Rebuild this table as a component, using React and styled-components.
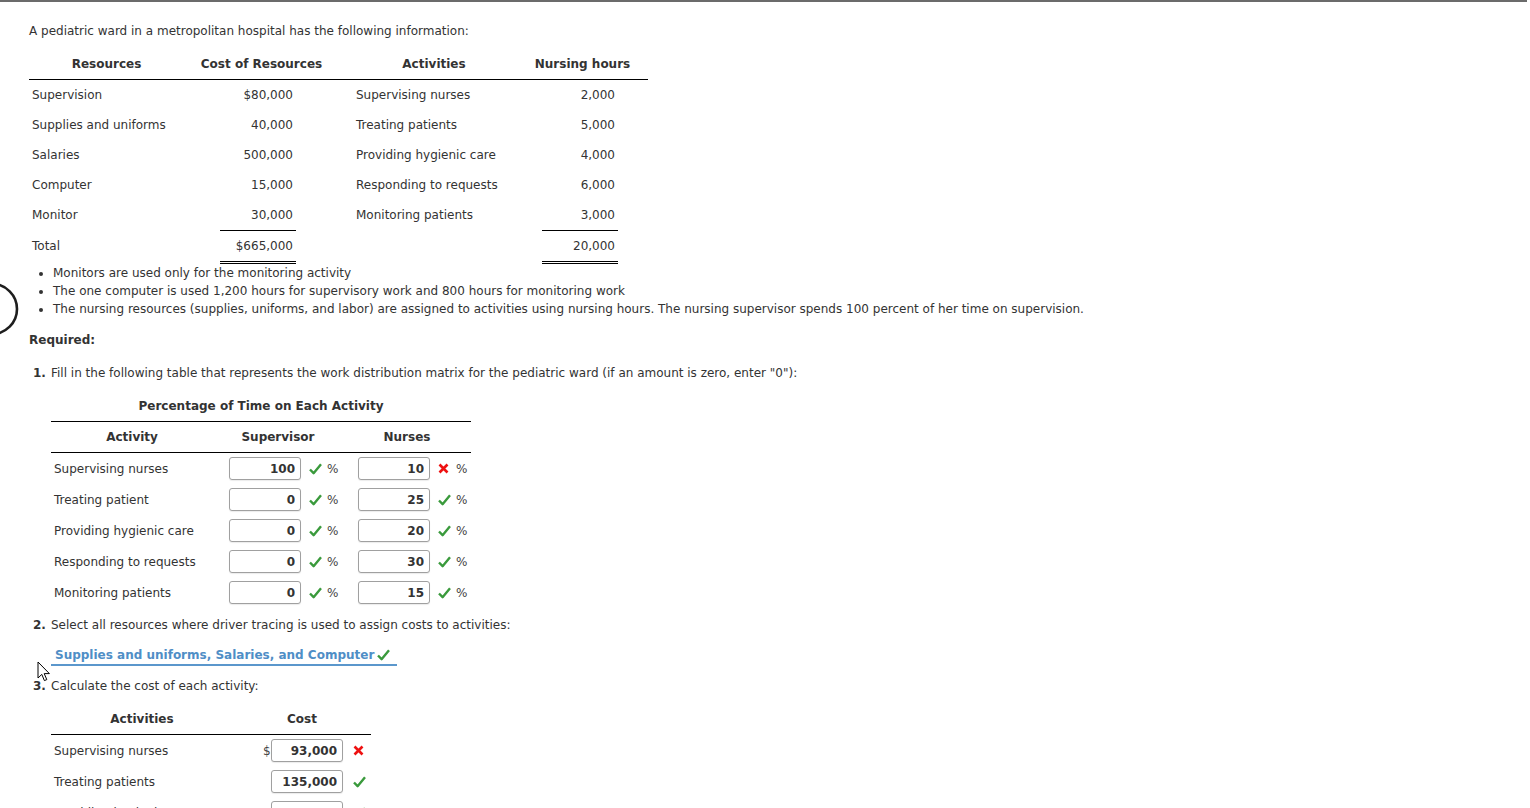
import React from "react";
import styled, { createGlobalStyle } from "styled-components";

const GlobalStyle = createGlobalStyle`
    html, body {
        margin: 0;
        padding: 0;
        background: #ffffff;
    }
    body {
        font-family: Verdana, "DejaVu Sans", sans-serif;
        font-size: 12px;
        color: #333333;
    }
`

const Page = styled.div`
    position: relative;
    width: 1530px;
    height: 808px;
    overflow: hidden;
    padding-left: 29px;
    box-sizing: border-box;
`

const TopRule = styled.div`
    width: 1527px;
    height: 2px;
    margin-left: -29px;
    background: #6b6b6b;
`

const Line = styled.div`
    line-height: 18px;
    margin-top: ${(p) => p.$mt || 0}px;
    margin-left: ${(p) => p.$ml || 0}px;
    font-weight: ${(p) => (p.$bold ? 700 : 400)};
    white-space: nowrap;
`

const Num = styled.b`
    display: inline-block;
    width: 18px;
`

/* ---------- resource table ---------- */

const InfoTable = styled.div`
    display: grid;
    grid-template-columns: 155px 155px 184px 125px;
    width: 619px;
    margin-top: 10px;
`

const InfoHead = styled.div`
    height: 29px;
    line-height: 29px;
    border-bottom: 1px solid #000;
    font-weight: 700;
    text-align: center;
    padding-left: ${(p) => p.$pl || 0}px;
    padding-right: ${(p) => p.$pr || 0}px;
`

const InfoCell = styled.div`
    display: flex;
    align-items: flex-start;
    line-height: 30px;
    padding-left: ${(p) => p.$pl || 0}px;
`

const AmountCell = styled.div`
    display: flex;
    justify-content: flex-end;
    align-items: flex-start;
    padding-right: ${(p) => p.$pr}px;
`

const Amount = styled.div`
    width: 73px;
    height: 30px;
    line-height: 30px;
    text-align: right;
    padding-right: 3px;
    box-sizing: content-box;
    border-bottom: ${(p) => p.$rule || "none"};
`

const Bullets = styled.ul`
    margin: 0;
    padding-left: 24px;
    line-height: 18px;
    list-style: disc;
`

/* ---------- matrix tables ---------- */

const Block = styled.div`
    width: ${(p) => p.$w}px;
    margin-left: 22px;
    margin-top: ${(p) => p.$mt || 0}px;
`

const Caption = styled.div`
    line-height: 18px;
    font-weight: 700;
    text-align: center;
    padding-bottom: 6px;
    border-bottom: 1px solid #000;
`

const Grid = styled.div`
    display: grid;
    grid-template-columns: ${(p) => p.$cols};
`

const HeadCell = styled.div`
    height: 30px;
    line-height: 30px;
    border-bottom: 1px solid #000;
    font-weight: 700;
    text-align: center;
`

const RowCell = styled.div`
    display: flex;
    align-items: center;
    height: 31px;
    padding-left: ${(p) => p.$pl || 0}px;
`

const Field = styled.input`
    width: 72px;
    height: 23px;
    box-sizing: border-box;
    border: 1px solid #a0a0a0;
    border-radius: 3px;
    box-shadow: 0 1px 1px rgba(0, 0, 0, 0.08);
    padding: 0 5px 0 0;
    margin: 0;
    text-align: right;
    font-family: inherit;
    font-size: 12px;
    font-weight: 700;
    color: #333;
    background: #fff;
    outline: none;
`

const Mark = styled.span`
    display: inline-flex;
    flex-shrink: 0;
    width: 14px;
    margin-left: ${(p) => p.$ml || 8}px;
    margin-right: 4px;
`

const Percent = styled.span`
    color: #444;
`

const Dollar = styled.span`
    width: 8px;
    color: #444;
`

const Answer = styled.div`
    width: 342px;
    margin: 12px 0 0 22px;
    padding-left: 4px;
    line-height: 18px;
    border-bottom: 2px solid #5b97cc;
    color: #4f8ec6;
    font-weight: 700;
    white-space: nowrap;
    display: flex;
    align-items: center;
    gap: 3px;

    svg {
        flex-shrink: 0;
    }
`

const Ring = styled.svg`
    position: absolute;
    left: 0;
    top: 281px;
`

const Cursor = styled.svg`
    position: absolute;
    left: 37px;
    top: 661px;
`

function Check() {
    return (
        <svg width="13" height="12" viewBox="0 0 13 12">
            <path d="M1 6.5 L4.6 10.2 L12 1.2" fill="none" stroke="#3a9a3c" strokeWidth="2.4" strokeLinejoin="round" />
        </svg>
    );
}

function Cross() {
    return (
        <svg width="11" height="11" viewBox="0 0 11 11">
            <path d="M1.5 1.5 L9.5 9.5 M9.5 1.5 L1.5 9.5" fill="none" stroke="#ee1111" strokeWidth="2.6" />
        </svg>
    );
}

const resources = [
    ["Supervision", "$80,000", "Supervising nurses", "2,000"],
    ["Supplies and uniforms", "40,000", "Treating patients", "5,000"],
    ["Salaries", "500,000", "Providing hygienic care", "4,000"],
    ["Computer", "15,000", "Responding to requests", "6,000"],
    ["Monitor", "30,000", "Monitoring patients", "3,000"],
];

const matrix = [
    ["Supervising nurses", "100", true, "10", false],
    ["Treating patient", "0", true, "25", true],
    ["Providing hygienic care", "0", true, "20", true],
    ["Responding to requests", "0", true, "30", true],
    ["Monitoring patients", "0", true, "15", true],
];

const costs = [
    ["Supervising nurses", "93,000", false],
    ["Treating patients", "135,000", true],
    ["Providing hygienic care", "108,000", true],
    ["Responding to requests", "162,000", true],
];

export default function App() {
    return (
        <Page>
            <GlobalStyle />
            <TopRule />
            <Line $mt={20}>A pediatric ward in a metropolitan hospital has the following information:</Line>

            <InfoTable>
                <InfoHead>Resources</InfoHead>
                <InfoHead>Cost of Resources</InfoHead>
                <InfoHead $pl={6}>Activities</InfoHead>
                <InfoHead $pr={6}>Nursing hours</InfoHead>
                {resources.map((r, i) => (
                    <React.Fragment key={r[0]}>
                        <InfoCell $pl={3}>{r[0]}</InfoCell>
                        <AmountCell $pr={43}>
                            <Amount $rule={i === 4 ? "1px solid #000" : "none"}>{r[1]}</Amount>
                        </AmountCell>
                        <InfoCell $pl={17}>{r[2]}</InfoCell>
                        <AmountCell $pr={30}>
                            <Amount $rule={i === 4 ? "1px solid #000" : "none"}>{r[3]}</Amount>
                        </AmountCell>
                    </React.Fragment>
                ))}
                <InfoCell $pl={3}>Total</InfoCell>
                <AmountCell $pr={43}>
                    <Amount $rule="3px double #000">$665,000</Amount>
                </AmountCell>
                <InfoCell />
                <AmountCell $pr={30}>
                    <Amount $rule="3px double #000">20,000</Amount>
                </AmountCell>
            </InfoTable>

            <Bullets>
                <li>Monitors are used only for the monitoring activity</li>
                <li>The one computer is used 1,200 hours for supervisory work and 800 hours for monitoring work</li>
                <li>The nursing resources (supplies, uniforms, and labor) are assigned to activities using nursing hours. The nursing supervisor spends 100 percent of her time on supervision.</li>
            </Bullets>

            <Line $mt={13} $bold>Required:</Line>
            <Line $mt={15} $ml={4}><Num>1.</Num>Fill in the following table that represents the work distribution matrix for the pediatric ward (if an amount is zero, enter "0"):</Line>

            <Block $w={420} $mt={15}>
                <Caption>Percentage of Time on Each Activity</Caption>
                <Grid $cols="162px 130px 128px">
                    <HeadCell>Activity</HeadCell>
                    <HeadCell>Supervisor</HeadCell>
                    <HeadCell>Nurses</HeadCell>
                    {matrix.map((m) => (
                        <React.Fragment key={m[0]}>
                            <RowCell $pl={3}>{m[0]}</RowCell>
                            <RowCell $pl={16}>
                                <Field readOnly value={m[1]} />
                                <Mark>{m[2] ? <Check /> : <Cross />}</Mark>
                                <Percent>%</Percent>
                            </RowCell>
                            <RowCell $pl={15}>
                                <Field readOnly value={m[3]} />
                                <Mark>{m[4] ? <Check /> : <Cross />}</Mark>
                                <Percent>%</Percent>
                            </RowCell>
                        </React.Fragment>
                    ))}
                </Grid>
            </Block>

            <Line $mt={8} $ml={4}><Num>2.</Num>Select all resources where driver tracing is used to assign costs to activities:</Line>
            <Answer>
                Supplies and uniforms, Salaries, and Computer
                <Check />
            </Answer>
            <Line $mt={11} $ml={4}><Num>3.</Num>Calculate the cost of each activity:</Line>

            <Block $w={320} $mt={9}>
                <Grid $cols="182px 138px">
                    <HeadCell>Activities</HeadCell>
                    <HeadCell>Cost</HeadCell>
                    {costs.map((c, i) => (
                        <React.Fragment key={c[0]}>
                            <RowCell $pl={3}>{c[0]}</RowCell>
                            <RowCell $pl={30}>
                                <Dollar>{i === 0 ? "$" : ""}</Dollar>
                                <Field readOnly value={c[1]} />
                                <Mark $ml={10}>{c[2] ? <Check /> : <Cross />}</Mark>
                            </RowCell>
                        </React.Fragment>
                    ))}
                </Grid>
            </Block>

            <Ring width="20" height="56" viewBox="0 0 20 56">
                <circle cx="-8" cy="28" r="25" fill="none" stroke="#1e1e1e" strokeWidth="2.6" />
            </Ring>
            <Cursor width="14" height="22" viewBox="0 0 14 22">
                <path d="M1 1 L1 17 L4.8 13.4 L7.4 19.6 L9.8 18.6 L7.2 12.6 L12.4 12.6 Z" fill="#fff" stroke="#000" strokeWidth="1" strokeLinejoin="round" />
            </Cursor>
        </Page>
    );
}
